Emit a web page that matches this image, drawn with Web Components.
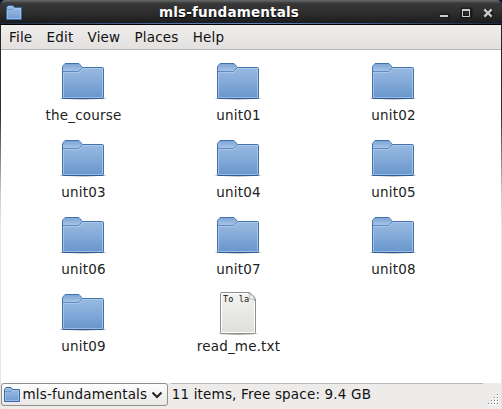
<!DOCTYPE html>
<html lang="en"><head><meta charset="utf-8"><title>mls-fundamentals</title>
<style>html,body{margin:0;height:100%;overflow:hidden}body{font:13.5px/16px "DejaVu Sans",sans-serif;letter-spacing:.18px;color:#1a1a1a;background:#04082a}</style></head>
<body>
<file-window>
<title-bar slot="title">mls-fundamentals</title-bar>
<menu-bar slot="menu"><span>File</span><span>Edit</span><span>View</span><span>Places</span><span>Help</span></menu-bar>
<file-item>the_course</file-item><file-item>unit01</file-item><file-item>unit02</file-item>
<file-item>unit03</file-item><file-item>unit04</file-item><file-item>unit05</file-item>
<file-item>unit06</file-item><file-item>unit07</file-item><file-item>unit08</file-item>
<file-item>unit09</file-item><file-item kind="text">read_me.txt</file-item>
<status-bar slot="status"><span slot="path">mls-fundamentals</span>11 items, Free space: 9.4 GB</status-bar>
</file-window>
<script>
const define=(name,html)=>customElements.define(name,class extends HTMLElement{
 constructor(){super();this.attachShadow({mode:'open'}).innerHTML=typeof html==='function'?html(this):html}});

define('small-folder',`<style>:host{display:block;width:16px;height:16px}svg{display:block}</style>
<svg width="16" height="16"><defs><linearGradient id="g" x2="0" y2="1"><stop stop-color="#a3c1e3"/><stop offset="1" stop-color="#6d9bd1"/></linearGradient></defs>
<path d="M.5 14.5V2.5L2 .5H7L8.5 2.5H15.5V14.5Z" fill="url(#g)" stroke="#3867a7"/>
<path d="M1.5 4.5H7L8.5 3.5H14.5V13.5H1.5Z" fill="none" stroke="#b4cdea" stroke-opacity=".6"/>
<path d="M1 4.5H6.5L8.5 2.5" fill="none" stroke="#6b95cb"/></svg>`);

define('folder-icon',`<style>:host,svg{display:block}</style>
<svg width="48" height="48"><defs>
<linearGradient id="g" x2="0" y2="1"><stop stop-color="#9fbfe3"/><stop offset=".55" stop-color="#82a9d8"/><stop offset="1" stop-color="#6795cc"/></linearGradient>
<linearGradient id="t" x2="0" y2="1"><stop stop-color="#7ea5d5"/><stop offset="1" stop-color="#a9c6e6"/></linearGradient>
<filter id="b" x="-20%" y="-200%" width="140%" height="500%"><feGaussianBlur stdDeviation=".9 .6"/></filter></defs>
<ellipse cx="24" cy="40.2" rx="22.5" ry="1.2" fill="#000" opacity=".45" filter="url(#b)"/>
<path d="M3.5 39.5V8.5L6 5.5H20L23.5 9.5H43.5Q44.5 9.5 44.5 10.5V39.5Q44.5 40.5 43.5 40.5H4.5Q3.5 40.5 3.5 39.5Z" fill="url(#g)" stroke="#4273b1"/>
<path d="M4 13.5V9L6.3 6H19.7L22.7 9.5L19.5 13.5Z" fill="url(#t)"/>
<path d="M4 13.5H19.5L23 9.8" fill="none" stroke="#5f8bc3"/>
<path d="M4.5 39.5V14.5H20L24 10.5H43.5V39.5Z" fill="none" stroke="#bdd3ed" stroke-opacity=".6"/>
<path d="M4 40.5H44" stroke="#2d5b97"/></svg>`);

define('text-icon',`<style>:host{display:block;position:relative;width:48px;height:48px}svg{display:block;margin-top:-1px}
span{position:absolute;left:9px;top:5px;font:8.6px/10px "DejaVu Sans Mono",monospace;letter-spacing:.05px;color:#111;white-space:pre}</style>
<svg width="48" height="49"><defs><linearGradient id="g" x2="0" y2="1"><stop stop-color="#f3f3f1"/><stop offset="1" stop-color="#dededb"/></linearGradient>
<filter id="b" x="-20%" y="-200%" width="140%" height="500%"><feGaussianBlur stdDeviation=".9 .6"/></filter></defs>
<ellipse cx="24" cy="45.5" rx="19" ry="1.2" opacity=".45" filter="url(#b)"/>
<path d="M7 4.5H35Q37 4.5 41.5 11V44.5Q41.5 45.5 40.5 45.5H7.5Q6.5 45.5 6.5 44.5V5.5Q6.5 4.5 7.5 4.5Z" fill="url(#g)" stroke="#8f918d"/>
<path d="M7.5 44.5V5.5H34.5M40.5 13V44.5H7.5" fill="none" stroke="#fff"/>
<path d="M34.5 5Q36.5 8 35.5 11Q39 10 41 13Q40.5 8 34.5 5Z" fill="#fafafa" stroke="#aaa" stroke-width=".8"/></svg><span>To la</span>`);

define('title-bar',`<style>:host{height:25px;box-sizing:border-box;display:grid;grid-template-columns:80px 1fr 80px;align-items:start;color:#fff;font-weight:bold;text-align:center;border-radius:5px 5px 0 0;background:linear-gradient(90deg,#202a3a,#5876a4 35%,#6484b5 50%,#5876a4 60%,#202a3a) 0 23px/100% 1px no-repeat,linear-gradient(#616362 0 1px,#484848 2px,#363636 4px,#303030 11px,#202020 21px,#171d28 23px,#000 24px)}
small-folder{margin:5px 0 0 6px}b{margin:4px 0 0 -44px;text-shadow:0 1px 1px #000}svg{display:block}</style>
<small-folder></small-folder><b><slot></slot></b>
<svg width="80" height="24"><g fill="none" stroke="#101010" stroke-width="4"><path d="M17.5 15.5H27.5M40.5 9.5H48.5V16.5H40.5ZM64 10 70.5 16.5M70.5 10 64 16.5" stroke-opacity=".6"/></g>
<g shape-rendering="crispEdges" fill="#ccc"><path d="M18 15H26V17H18Z"/><path d="M40 9H48V17H40ZM41 11V16H47V11Z" fill-rule="evenodd"/></g>
<path d="M63.2 10.2 68.8 15.8M68.8 10.2 63.2 15.8" stroke="#ccc" stroke-width="2.3" stroke-linecap="square"/></svg>`);

define('menu-bar',`<style>:host{display:flex;gap:14.2px;height:25px;box-sizing:border-box;padding:4px 8px;border-bottom:1px solid #b5b5b4;background:linear-gradient(#eeedec,#e2e1df);color:#111}</style><slot></slot>`);

define('file-item',el=>`<style>:host{display:flex;flex-direction:column;align-items:center;height:77px;color:#222}span{margin:1px 0 0 1px}</style>
${el.getAttribute('kind')==='text'?'<text-icon></text-icon>':'<folder-icon></folder-icon>'}<span><slot></slot></span>`);

define('status-bar',`<style>:host{display:flex;height:26px;background:#edeceb;color:#111}
.p{display:flex;align-items:center;box-sizing:border-box;width:167px;height:23px;border:1px solid #8e8e8c;border-radius:3px;background:linear-gradient(#fff,#f3f3f2 50%,#e9e8e7);padding-left:2px;gap:2.5px}
.p slot{display:block;width:125px;white-space:nowrap;margin-top:-2px}.p svg{margin-left:1px}.s{box-sizing:border-box;width:313px;margin-left:3px;border-top:1px solid #b8b8b7;padding:2px 0 0 1px;white-space:nowrap}
.g{margin:11px 0 0 5px}</style>
<div class="p"><small-folder></small-folder><slot name="path"></slot><svg width="12" height="10"><path d="M1.5 2.5 6 7 10.5 2.5" fill="none" stroke="#222" stroke-width="2"/></svg></div>
<div class="s"><slot></slot></div>
<svg class="g" width="13" height="13" shape-rendering="crispEdges">${[[9,0],[6,3],[9,3],[3,6],[6,6],[9,6],[0,9],[3,9],[6,9],[9,9]].map(([x,y])=>`<path d="M${x} ${y}h2v2h-2z" fill="#fff"/><path d="M${x} ${y}h1v1h-1z" fill="#777"/>`).join('')}</svg>`);

define('file-window',`<style>:host{display:flex;flex-direction:column;width:502px;height:409px;box-sizing:border-box}
.body{display:flex;flex-direction:column;flex:1;min-height:0;padding:0 1px;background:linear-gradient(#222 0,#333 90px,#ccc 170px,#e6e6e5 200px)}
main{flex:1;min-height:0;background:#fff;display:grid;grid-template-columns:155px 155px 155px;align-content:start;padding:8px 0 0 4.5px;overflow:hidden}</style>
<slot name="title"></slot><div class="body"><slot name="menu"></slot><main><slot></slot></main><slot name="status"></slot></div>`);
</script></body></html>
